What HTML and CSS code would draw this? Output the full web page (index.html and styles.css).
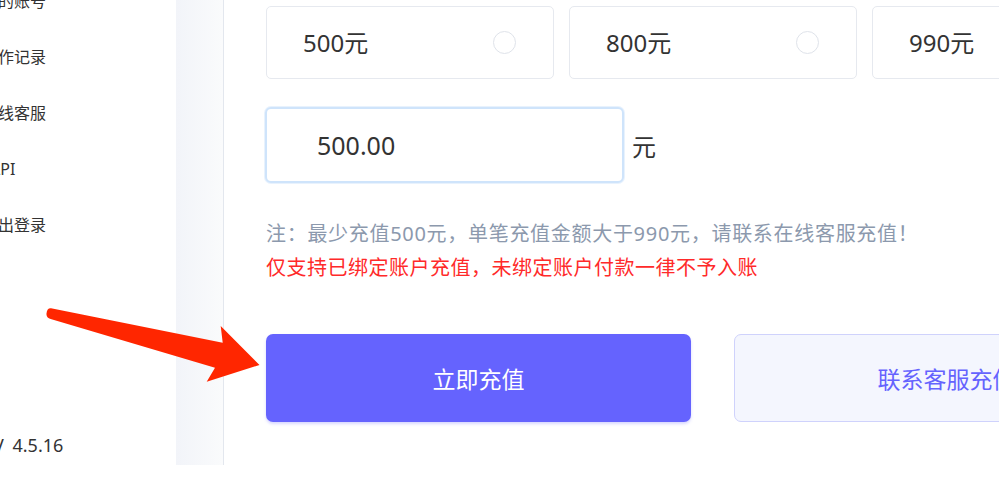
FILE: index.html
```html
<!DOCTYPE html>
<html lang="zh-CN">
<head>
  <meta charset="UTF-8">
  <meta name="viewport" content="width=device-width, initial-scale=1.0">
  <title>充值</title>
  <link rel="stylesheet" href="styles.css">
</head>
<body>
  <div class="layout">
    <div class="sidebar">
      <ul class="menu">
        <li>我的账号</li>
        <li>操作记录</li>
        <li>在线客服</li>
        <li class="short">API</li>
        <li>退出登录</li>
      </ul>
      <div class="version">V 4.5.16</div>
    </div>
    <div class="strip"></div>

    <div class="main">
      <!-- 充值金额选项 -->
      <div class="amounts">
        <div class="amount-card"><span>500元</span><i class="radio"></i></div>
        <div class="amount-card"><span>800元</span><i class="radio"></i></div>
        <div class="amount-card"><span>990元</span><i class="radio"></i></div>
      </div>

      <div class="custom">
        <input class="amount-input" type="text" value="500.00">
        <span class="unit">元</span>
      </div>

      <p class="note">注：最少充值500元，单笔充值金额大于990元，请联系在线客服充值！</p>
      <p class="warn">仅支持已绑定账户充值，未绑定账户付款一律不予入账</p>

      <div class="actions">
        <button class="btn btn-primary">立即充值</button>
        <button class="btn btn-plain">联系客服充值</button>
      </div>
    </div>
  </div>

  <svg class="arrow" width="999" height="481" viewBox="0 0 999 481">
    <path d="M51 308.3 L222.7 342.7 L220.7 326 L259.5 365 L206.7 381.7 L215 367.7 L51.5 319.3 Q46 318 46.5 313.5 Q47 308 51 308.3 Z" fill="#ff2600"/>
  </svg>
</body>
</html>
```

FILE: styles.css
```css
body {
  margin: 0;
  width: 999px;
  height: 481px;
  overflow: hidden;
  background: #fff;
  font-family: "Noto Sans", "Noto Sans CJK SC", sans-serif;
  color: #333;
}

.layout {
  display: flex;
  height: 481px;
}

.sidebar {
  width: 176px;
  flex-shrink: 0;
  position: relative;
  overflow: hidden;
}

.menu {
  list-style: none;
  margin: -27px 0 0 -18px; /* 页面已滚动，左侧被裁掉 */
  padding: 0;
}
.menu li {
  height: 56px;
  line-height: 56px;
  font-size: 16px;
  white-space: nowrap;
}
.menu li.short {
  padding-left: 8px;
}

.version {
  margin: 180px 0 0 -7px;
  font-size: 18px;
  line-height: 24px;
  word-spacing: 4px;
  white-space: nowrap;
}

.strip {
  width: 47px;
  height: 465px;
  flex-shrink: 0;
  background: linear-gradient(to right, #f2f4f9, #fafbfc);
  border-right: 1px solid #e3e7ee;
}

.main {
  flex: 1;
  overflow: hidden;
  padding: 6px 0 0 42px;
}

.amounts {
  display: flex;
  gap: 15px;
}
.amount-card {
  width: 288px;
  height: 73px;
  flex-shrink: 0;
  box-sizing: border-box;
  border: 1px solid #e6e9ef;
  border-radius: 5px;
  display: flex;
  align-items: center;
  justify-content: space-between;
  padding: 0 37px 3px 36px;
  font-size: 24px;
}
.radio {
  width: 21px;
  height: 21px;
  margin-top: 3px;
  border: 1px solid #dfe3ea;
  border-radius: 50%;
}

.custom {
  display: flex;
  align-items: center;
  margin: 28px 0 0 -1px;
}
.amount-input {
  width: 359px;
  height: 76px;
  box-sizing: border-box;
  border: 2px solid #cfe4fb;
  box-shadow: 0 0 0 1px #e8f2fd;
  border-radius: 6px;
  padding: 0 0 0 50px;
  font-family: "Noto Sans", "Noto Sans CJK SC", sans-serif;
  font-size: 25px;
  color: #333;
  outline: none;
}
.unit {
  margin-left: 8px;
  font-size: 24px;
}

.note, .warn {
  margin: 0;
  font-size: 20px;
  line-height: 34px;
  white-space: nowrap;
}
.note {
  margin-top: 34px;
  color: #8c99ad;
  letter-spacing: 0.7px;
}
.warn {
  color: #ff2a2a;
  letter-spacing: 0.5px;
}

.actions {
  display: flex;
  gap: 43px;
  margin-top: 49px;
}
.btn {
  width: 425px;
  height: 88px;
  flex-shrink: 0;
  border-radius: 7px;
  font-family: "Noto Sans", "Noto Sans CJK SC", sans-serif;
  font-size: 23px;
  cursor: pointer;
}
.btn-primary {
  background: #6563fe;
  color: #fff;
  border: none;
  box-shadow: 0 2px 3px rgba(101, 99, 254, 0.25);
}
.btn-plain {
  background: #f4f6fe;
  color: #6563fe;
  border: 1px solid #cfd2fc;
}

.arrow {
  position: absolute;
  left: 0;
  top: 0;
  pointer-events: none;
}
```
